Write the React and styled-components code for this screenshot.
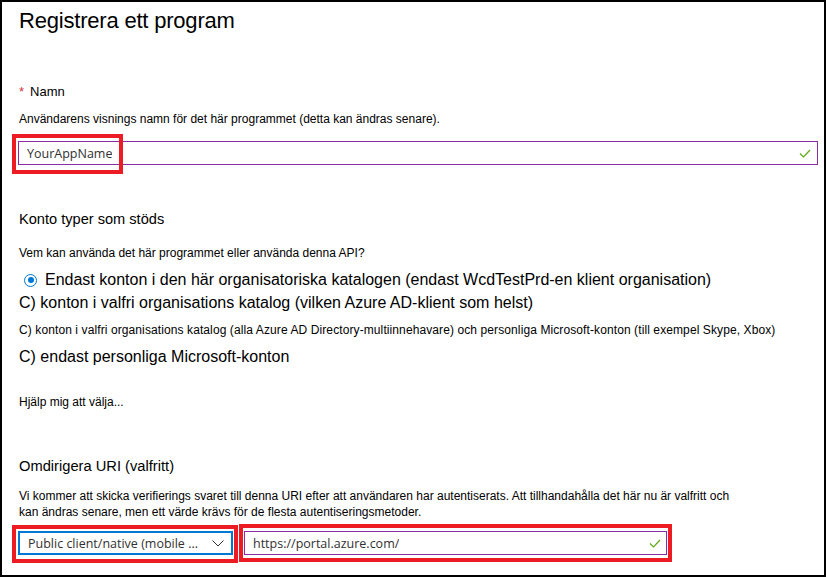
import React from "react";
import styled, { createGlobalStyle } from "styled-components";

const Global = createGlobalStyle`
  html, body { margin: 0; padding: 0; background: #fff; }
  * { box-sizing: border-box; }
`;

const Frame = styled.div`
  width: 826px;
  height: 577px;
  border: 2px solid #000;
  padding: 5px 0 0 17px;
  font-family: "Liberation Sans", Arial, sans-serif;
  color: #000;
  background: #fff;
  overflow: hidden;
`;

const Title = styled.h1`
  margin: 0;
  padding-top: 1px;
  font-size: 22px;
  line-height: 25px;
  letter-spacing: -0.2px;
  font-weight: 400;
  color: #000;
`;

const Text = styled.div`
  margin-top: ${(p) => p.$mt || 0}px;
  font-size: ${(p) => p.$fs || 12}px;
  line-height: ${(p) => p.$lh || 14}px;
  letter-spacing: ${(p) => p.$ls || 0}px;
  white-space: nowrap;
`;

const Required = styled.span`
  color: #d13438;
  margin-right: 6px;
`;

const Field = styled.div`
  position: relative;
  margin-top: ${(p) => p.$mt || 0}px;
  margin-left: -1px;
  width: ${(p) => p.$w}px;
  height: 24px;
  display: flex;
  align-items: center;
  justify-content: space-between;
  padding: 0 ${(p) => p.$pr || 6}px 0 8px;
  border: ${(p) => (p.$select ? "2px solid #0078d4" : "1px solid #8a2da5")};
  font-family: "Open Sans", "Noto Sans", sans-serif;
  font-size: 12.5px;
  color: #323130;
  background: #fff;
`;

const FieldText = styled.span`
  white-space: nowrap;
  overflow: hidden;
`;

const Mark = styled.div`
  position: absolute;
  left: ${(p) => p.$l}px;
  top: ${(p) => p.$t}px;
  width: ${(p) => p.$w}px;
  height: ${(p) => p.$h}px;
  border: 4px solid #ed1c24;
  pointer-events: none;
`;

const RadioRow = styled.div`
  margin-top: ${(p) => p.$mt || 0}px;
  display: flex;
  align-items: center;
  font-size: 16px;
  line-height: 20px;
  white-space: nowrap;
`;

const Radio = styled.span`
  width: 13px;
  height: 13px;
  margin: 0 8px 0 5px;
  border: 1.5px solid #0078d4;
  border-radius: 50%;
  display: inline-flex;
  align-items: center;
  justify-content: center;
  flex: none;
  &::after {
    content: "";
    width: 6px;
    height: 6px;
    border-radius: 50%;
    background: #0078d4;
  }
`;

const UriRow = styled.div`
  margin-top: 11px;
  display: flex;
  gap: 12px;
`;

const Check = () => (
  <svg width="12" height="9" viewBox="0 0 12 9">
    <polyline points="1,4.5 4.5,8 11,1" fill="none" stroke="#5ea813" strokeWidth="1.2" />
  </svg>
);

const Chevron = () => (
  <svg width="12" height="7" viewBox="0 0 12 7">
    <polyline points="0.5,0.5 6,6 11.5,0.5" fill="none" stroke="#323130" strokeWidth="1" />
  </svg>
);

export default function App() {
  return (
    <>
      <Global />
      <Frame>
        <Title>Registrera ett program</Title>
        <Text $mt={51} $fs={13} $lh={16}>
          <Required>*</Required>Namn
        </Text>
        <Text $mt={12}>
          Användarens visnings namn för det här programmet (detta kan ändras senare).
        </Text>
        <Field $mt={15} $w={800}>
          <FieldText>YourAppName</FieldText>
          <Check />
          <Mark $l={-7} $t={-8} $w={111} $h={40} />
        </Field>
        <Text $mt={45} $fs={14.6} $lh={18}>Konto typer som stöds</Text>
        <Text $mt={18}>Vem kan använda det här programmet eller använda denna API?</Text>
        <RadioRow $mt={10}>
          <Radio />
          Endast konton i den här organisatoriska katalogen (endast WcdTestPrd-en klient organisation)
        </RadioRow>
        <Text $mt={3} $fs={16} $lh={20}>
          C) konton i valfri organisations katalog (vilken Azure AD-klient som helst)
        </Text>
        <Text $mt={10} $ls={0.1}>
          C) konton i valfri organisations katalog (alla Azure AD Directory-multiinnehavare) och personliga Microsoft-konton (till exempel Skype, Xbox)
        </Text>
        <Text $mt={10} $fs={16} $lh={20}>C) endast personliga Microsoft-konton</Text>
        <Text $mt={28}>Hjälp mig att välja...</Text>
        <Text $mt={48} $fs={14.7} $lh={18}>Omdirigera URI (valfritt)</Text>
        <Text $mt={13} $lh={16}>
          Vi kommer att skicka verifierings svaret till denna URI efter att användaren har autentiserats. Att tillhandahålla det här nu är valfritt och
          <br />
          kan ändras senare, men ett värde krävs för de flesta autentiseringsmetoder.
        </Text>
        <UriRow>
          <Field $select $w={215} $pr={7}>
            <FieldText>Public client/native (mobile ...</FieldText>
            <Chevron />
            <Mark $l={-8} $t={-8} $w={226} $h={38} />
          </Field>
          <Field $w={423} $pr={5}>
            <FieldText>https://portal.azure.com/</FieldText>
            <Check />
            <Mark $l={-6} $t={-8} $w={433} $h={38} />
          </Field>
        </UriRow>
      </Frame>
    </>
  );
}
